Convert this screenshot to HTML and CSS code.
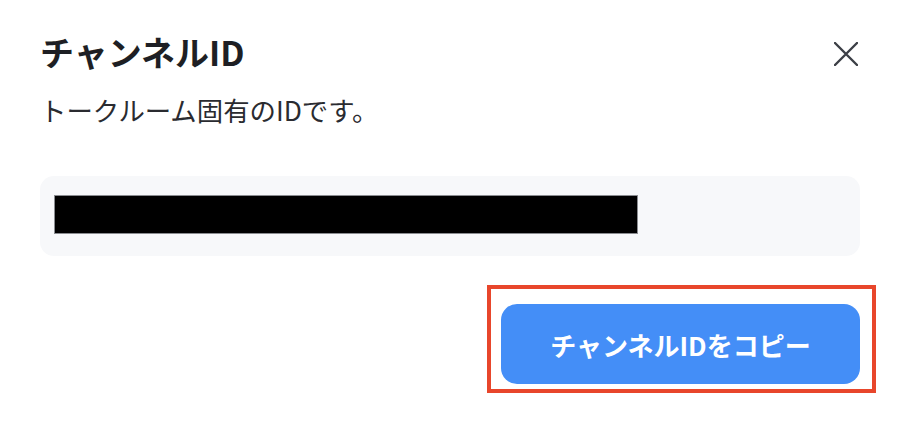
FILE: index.html
```html
<!DOCTYPE html>
<html lang="ja">
<head>
<meta charset="utf-8">
<link rel="stylesheet" href="styles.css">
</head>
<body>
<div class="dialog">
  <div class="header">
    <h1 class="title">チャンネルID</h1>
    <button class="close" aria-label="閉じる">
      <svg width="24" height="24" viewBox="0 0 24 24"><path d="M1 1 L23 23 M23 1 L1 23" stroke="#3c3f46" stroke-width="2.4" stroke-linecap="round" fill="none"/></svg>
    </button>
  </div>
  <p class="desc">トークルーム固有のIDです。</p>
  <div class="field"><span class="redact"></span></div>
  <div class="actions">
    <div class="highlight">
      <button class="copy">チャンネルIDをコピー</button>
    </div>
  </div>
</div>
</body>
</html>
```
FILE: styles.css
```css
html, body {
  margin: 0;
  padding: 0;
  background: #ffffff;
}
body {
  font-family: "Noto Sans CJK JP", "Noto Sans", sans-serif;
  color: #1e1f24;
}
.dialog {
  padding: 32px 38px 0 40px;
}
.header {
  display: flex;
  justify-content: space-between;
  align-items: flex-start;
  height: 40px;
}
.title {
  margin: 0;
  font-size: 34px;
  line-height: 40px;
  font-weight: 700;
}
.close {
  background: none;
  border: 0;
  padding: 0;
  margin: 10px 2px 0 0;
  width: 24px;
  height: 24px;
  display: block;
}
.close svg { display: block; }
.desc {
  margin: 22px 0 0 0;
  font-size: 26.4px;
  line-height: 32px;
  color: #2a2b30;
}
.field {
  margin-top: 50px;
  height: 80px;
  box-sizing: border-box;
  background: #f7f8fa;
  border-radius: 14px;
  padding: 19px 14px;
}
.redact {
  display: block;
  width: 584px;
  height: 39px;
  box-sizing: border-box;
  background: #000;
  border: 1px solid #8a8c90;
}
.actions {
  display: flex;
  justify-content: flex-end;
  margin-top: 29px;
  margin-right: -16px;
}
.highlight {
  border: 4px solid #e8462b;
  padding: 15px 12px 5px 10px;
}
.copy {
  display: block;
  width: 359px;
  height: 80px;
  border: 0;
  border-radius: 16px;
  background: #448ef7;
  color: #ffffff;
  font-family: "Noto Sans CJK JP", "Noto Sans", sans-serif;
  font-size: 26px;
  font-weight: 700;
}
```
